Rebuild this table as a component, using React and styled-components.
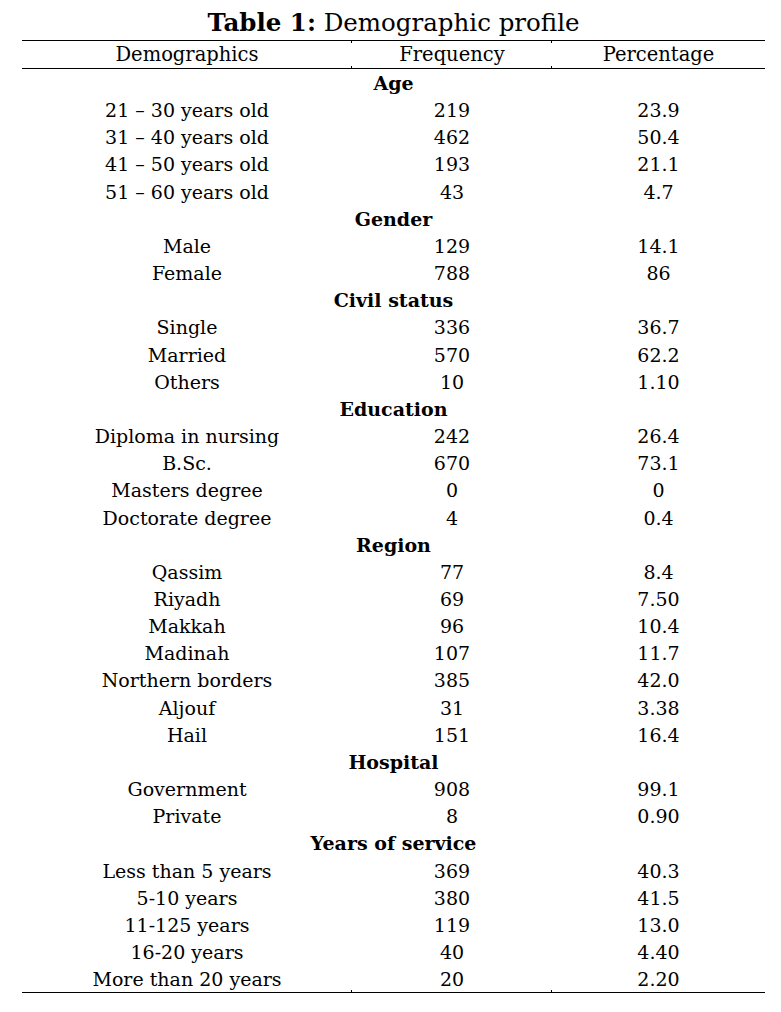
import React from 'react'
import styled, { createGlobalStyle } from 'styled-components'

const GlobalStyle = createGlobalStyle`
  body {
    margin: 0;
    background: #fff;
    color: #000;
    font-family: "DejaVu Serif", "Liberation Serif", serif;
  }
`

const Page = styled.div`
  width: 781px;
  padding: 5px 0 0 22px;
  box-sizing: border-box;
`

const Caption = styled.div`
  width: 743px;
  text-align: center;
  font-family: "DejaVu Serif", serif;
  font-size: 24.5px;
  line-height: 35px;

  b {
    font-weight: bold;
  }
`

const Table = styled.table`
  width: 743px;
  border-collapse: collapse;
  table-layout: fixed;
  font-size: 19px;
`

const HeadCell = styled.th`
  position: relative;
  font-weight: normal;
  font-size: 19.5px;
  height: 27px;
  padding: 0;
  border-top: 1px solid #000;
  border-bottom: 1px solid #000;

  &:not(:first-child)::before,
  &:not(:first-child)::after {
    content: '';
    position: absolute;
    left: -1px;
    width: 1px;
    height: 2px;
    background: #000;
  }
  &:not(:first-child)::before {
    top: 0;
  }
  &:not(:first-child)::after {
    bottom: 0;
  }
`

const Cell = styled.td`
  position: relative;
  text-align: center;
  padding: 2px 0 0;
  line-height: 25.15px;
  font-weight: ${p => (p.$section ? 'bold' : 'normal')};
  border-bottom: ${p => (p.$last ? '1px solid #000' : 'none')};

  ${p =>
    p.$last &&
    `
    &:not(:first-child)::after {
      content: '';
      position: absolute;
      left: -1px;
      bottom: 0;
      width: 1px;
      height: 2px;
      background: #000;
    }
  `}
`

const sections = [
  ['Age', [
    ['21 – 30 years old', '219', '23.9'],
    ['31 – 40 years old', '462', '50.4'],
    ['41 – 50 years old', '193', '21.1'],
    ['51 – 60 years old', '43', '4.7'],
  ]],
  ['Gender', [
    ['Male', '129', '14.1'],
    ['Female', '788', '86'],
  ]],
  ['Civil status', [
    ['Single', '336', '36.7'],
    ['Married', '570', '62.2'],
    ['Others', '10', '1.10'],
  ]],
  ['Education', [
    ['Diploma in nursing', '242', '26.4'],
    ['B.Sc.', '670', '73.1'],
    ['Masters degree', '0', '0'],
    ['Doctorate degree', '4', '0.4'],
  ]],
  ['Region', [
    ['Qassim', '77', '8.4'],
    ['Riyadh', '69', '7.50'],
    ['Makkah', '96', '10.4'],
    ['Madinah', '107', '11.7'],
    ['Northern borders', '385', '42.0'],
    ['Aljouf', '31', '3.38'],
    ['Hail', '151', '16.4'],
  ]],
  ['Hospital', [
    ['Government', '908', '99.1'],
    ['Private', '8', '0.90'],
  ]],
  ['Years of service', [
    ['Less than 5 years', '369', '40.3'],
    ['5-10 years', '380', '41.5'],
    ['11-125 years', '119', '13.0'],
    ['16-20 years', '40', '4.40'],
    ['More than 20 years', '20', '2.20'],
  ]],
]

export default function App() {
  return (
    <Page>
      <GlobalStyle />
      <Caption>
        <b>Table 1:</b> Demographic profile
      </Caption>
      <Table>
        <colgroup>
          <col style={{ width: 330 }} />
          <col style={{ width: 200 }} />
          <col style={{ width: 213 }} />
        </colgroup>
        <thead>
          <tr>
            <HeadCell>Demographics</HeadCell>
            <HeadCell>Frequency</HeadCell>
            <HeadCell>Percentage</HeadCell>
          </tr>
        </thead>
        <tbody>
          {sections.map(([title, rows], si) => (
            <React.Fragment key={title}>
              <tr>
                <Cell colSpan={3} $section>{title}</Cell>
              </tr>
              {rows.map((r, ri) => {
                const last = si === sections.length - 1 && ri === rows.length - 1
                return (
                  <tr key={r[0]}>
                    <Cell $last={last}>{r[0]}</Cell>
                    <Cell $last={last}>{r[1]}</Cell>
                    <Cell $last={last}>{r[2]}</Cell>
                  </tr>
                )
              })}
            </React.Fragment>
          ))}
        </tbody>
      </Table>
    </Page>
  )
}
